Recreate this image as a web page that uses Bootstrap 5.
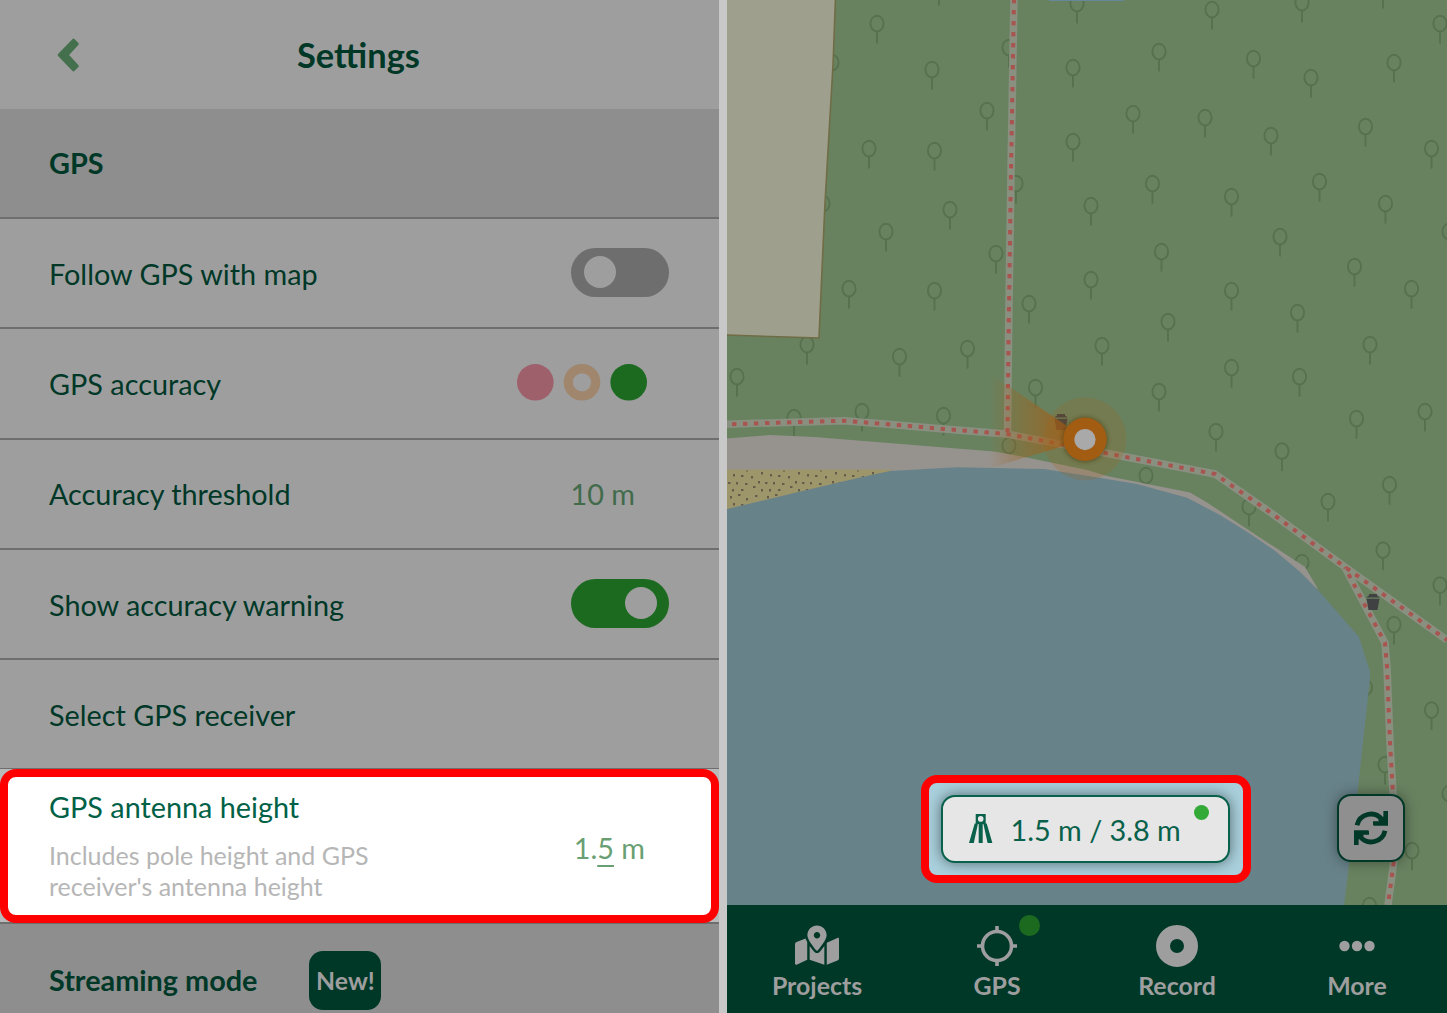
<!DOCTYPE html>
<html lang="en">
<head>
<meta charset="utf-8">
<meta name="viewport" content="width=device-width, initial-scale=1">
<title>GPS settings</title>
<link href="https://cdn.jsdelivr.net/npm/bootstrap@5.3.0/dist/css/bootstrap.min.css" rel="stylesheet">
<style>
:root{--ink:#003828;--panel:#9e9e9e;--section:#8e8e8e;--rule:#6e6e6e;--leaf:#1b6a20}
body{font-family:Lato,"Open Sans",sans-serif;font-size:28.8px;line-height:1.2;color:var(--ink);background:#c8c8c8;width:1447px;height:1013px;overflow:hidden}
svg{display:block}
.settings-pane{width:719px;background:var(--panel)}
.map-pane{width:720px;margin-left:8px}
.top-bar{height:109px;font-size:34.4px;padding:0 2px 0 0}
.back-btn{left:57px;top:38px}
.setting-row{height:110px;padding:1px 50px 0 49px;border-bottom:2px solid var(--rule)}
.setting-row.taller{height:111px}
.row-label{padding-top:2px}
.section-row{background:var(--section)}
.last-row{height:112px;border:0}
.row-value{color:#426b4c;margin-right:34px}
.switch-track{width:98px;height:49px;border-radius:25px;background:var(--rule);padding:0 12px 0 13px;margin-bottom:3px}
.switch-track.is-on{background:var(--leaf)}
.switch-knob{width:32px;height:32px;border-radius:50%;background:var(--panel)}
.accuracy-set{margin:0 22px 3px 0}
.focus-wrap{height:155px;margin-top:-1px;background:#b9b9b9;border-bottom:2px solid var(--rule)}
.focus-row{height:154px;border:8px solid red;border-radius:16px;background:#fff;padding:0 66px 0 41px;color:#006146}
.focus-title{margin-bottom:15px}
.focus-hint{font-size:25px;line-height:31px;color:#b6b6b6}
.focus-value{color:#6a9f73;padding-top:4px}
.edit-digit{text-decoration:underline;text-decoration-thickness:1.6px;text-underline-offset:6px;text-decoration-skip-ink:none}
.new-tag{width:72px;height:59px;border-radius:14px;background:var(--ink);color:var(--panel);font-size:24.8px;margin-left:52px}
.map-canvas{height:905px}
.gps-frame{left:194px;top:774.5px;width:330px;height:108.5px;border:8px solid red;border-radius:16px;background:#a9d0dc;overflow:hidden}
.gps-pill{width:289px;height:68px;border:2px solid #08614a;border-radius:14px;background:#e6e6e6;color:#08614a;padding-left:26px;margin:0 2px 0 0;box-shadow:0 0 14px rgba(0,0,0,.5)}
.pill-text{margin-left:18px;padding-top:4px}
.pill-dot{width:15px;height:15px;border-radius:50%;background:#33a938;right:19px;top:8px}
.sync-btn{left:610px;top:794px;width:68px;height:68px;border:2px solid var(--ink);border-radius:14px;background:#8f8f8f;box-shadow:0 0 13px rgba(0,0,0,.4)}
.bottom-nav{height:108px;background:var(--ink);color:var(--panel);font-size:24.9px}
.nav-cell{width:180px;padding-top:17px}
.nav-cell svg{margin-bottom:1px}
.status-dot{width:21px;height:21px;border-radius:50%;background:var(--leaf);left:112px;top:10px}
</style>
</head>
<body>
<div class="d-flex h-100">
  <main class="settings-pane h-100 overflow-hidden flex-shrink-0">
    <header class="top-bar position-relative d-flex align-items-center justify-content-center fw-bold">
      <svg class="back-btn position-absolute" width="23" height="34" viewBox="0 0 23 34"><path d="M2 17 16.5 2 20.5 6 10.5 17 20.5 28 16.5 32Z" fill="#44704d" stroke="#44704d" stroke-width="2.6" stroke-linejoin="round"/></svg>
      <span>Settings</span>
    </header>
    <div class="setting-row section-row d-flex align-items-center fw-bold">GPS</div>
    <div class="setting-row d-flex align-items-center justify-content-between"><span class="row-label">Follow GPS with map</span><span class="switch-track d-flex align-items-center"><span class="switch-knob"></span></span></div>
    <div class="setting-row taller d-flex align-items-center justify-content-between"><span>GPS accuracy</span>
      <svg class="accuracy-set" width="130" height="37" viewBox="0 0 130 37"><circle cx="18.3" cy="18.3" r="18.3" fill="#9e616c"/><circle cx="65" cy="18.3" r="13.7" fill="none" stroke="#a0866c" stroke-width="9.2"/><circle cx="111.7" cy="18.3" r="18.3" fill="#1b6a20"/></svg></div>
    <div class="setting-row d-flex align-items-center justify-content-between"><span>Accuracy threshold</span><span class="row-value">10 m</span></div>
    <div class="setting-row d-flex align-items-center justify-content-between"><span class="row-label">Show accuracy warning</span><span class="switch-track is-on d-flex align-items-center justify-content-end"><span class="switch-knob"></span></span></div>
    <div class="setting-row d-flex align-items-center"><span class="row-label">Select GPS receiver</span></div>
    <div class="focus-wrap">
      <div class="focus-row d-flex align-items-center justify-content-between">
        <div><div class="focus-title">GPS antenna height</div><div class="focus-hint">Includes pole height and GPS<br>receiver's antenna height</div></div>
        <span class="focus-value">1.<span class="edit-digit">5</span> m</span>
      </div>
    </div>
    <div class="setting-row section-row last-row d-flex align-items-center fw-bold"><span>Streaming mode</span><span class="new-tag d-flex align-items-center justify-content-center">New!</span></div>
  </main>
  <section class="map-pane h-100 position-relative flex-shrink-0">
    <div class="map-canvas">
      <svg width="720" height="905" viewBox="0 0 720 905">
        <defs>
          <g id="tree" fill="none" stroke="#57714f" stroke-width="1.9"><ellipse rx="6.6" ry="7.9"/><path d="M0 8V20"/></g>
          <pattern id="grains" width="37" height="29" patternUnits="userSpaceOnUse"><path fill="#655d4c" d="M3 3h2v2.5h-2zM11 1h2.5v2h-2.5zM19 5h2v2.5h-2zM28 2h2.5v2h-2.5zM34 8h2v2.5h-2zM6 10h2v2.5h-2zM14 11h2.5v2h-2.5zM24 12h2v2.5h-2zM1 18h2.5v2h-2.5zM9 18h2v2.5h-2zM18 19h2.5v2h-2.5zM31 17h2v2.5h-2zM26 22h2.5v2h-2.5zM5 25h2v2.5h-2zM14 25h2.5v2h-2.5zM34 25h2v2.5h-2z"/></pattern>
          <linearGradient id="beam" x1="262" x2="345" y1="0" y2="0" gradientUnits="userSpaceOnUse"><stop offset="0" stop-color="#a85c14" stop-opacity="0"/><stop offset=".3" stop-color="#a06018" stop-opacity=".3"/><stop offset="1" stop-color="#a85c14" stop-opacity=".8"/></linearGradient>
          <filter id="soft" x="-30%" y="-30%" width="160%" height="160%"><feGaussianBlur stdDeviation="2"/></filter>
          <g id="bin" fill="#404143"><path d="M-7-4.5-4-6.5V-8H4V-6.5L7-4.5ZM-6.5-3.2H6.5L4.5 8H-4.5Z"/></g>
        </defs>
        <rect width="720" height="905" fill="#688260"/>
        <g id="forest"></g>
        <path d="M-2-2H108.5L106 65 98 203 95 270 92 338-2 335Z" fill="#9e9f8c" stroke="#706c45" stroke-width="1.6"/>
        <path d="M322 0H397" stroke="#66869a" stroke-width="2"/>
        <path d="M0 438.5 43 435 87 437 267 451.5 300 457.5 360 470 380 476 463 492.5 480 502.5 520 529 578 567 591 589 560 575 500 540 400 500 0 500Z" fill="#96938e"/>
        <path d="M0 469.5H165L100 520H0Z" fill="#9e966b"/>
        <path d="M0 470.5H165L100 520H0Z" fill="url(#grains)"/>
        <path d="M0 509 67 493 133 477.5 163 471 230 467.3 317 469 360 475.7 410 484 460 497.7 493 515 520 531.7 547 550 573 571.7 591 590 623 626.7 632 637 643 672 643 678 631 788 622 865 617 905H0Z" fill="#68828a"/>
        <g fill="none" stroke-linejoin="round">
          <g stroke="#899080" stroke-width="7.5"><path d="M287-2 284 170 281.5 340 280.5 434M0 424.3 50 422.7 117 420.7 167 424.7 217 429 280 434 333 444 378 453 488 474 547 515 618 567 720 640M618 567 623 577 658 643 660 667 663 743 667 810V860L661 905"/></g>
          <g stroke="#a8544f" stroke-width="4" stroke-dasharray="4.4 6.6"><path d="M287-1 284 170 281.5 340 280.5 434"/><path stroke-dashoffset="-5" d="M0 424.3 50 422.7 117 420.7 167 424.7 217 429 280 434 333 444 378 453 488 474 547 515 618 567 720 640"/><path stroke-dashoffset="-8" d="M618 567 623 577 658 643 660 667 663 743 667 810V860L661 905"/></g>
        </g>
        <use href="#bin" x="646" y="602"/>
        <use href="#bin" x="334" y="422"/>
        <path d="M262 374 286 389 350 433 350 442 262 468.5Z" fill="url(#beam)"/>
        <circle cx="358" cy="438.8" r="41.5" fill="#a06218" fill-opacity=".22"/>
        <circle cx="358" cy="439.5" r="22.5" fill="#403818" fill-opacity=".6" filter="url(#soft)"/>
        <circle cx="358" cy="439.3" r="21.7" fill="#a35d13"/>
        <circle cx="358" cy="439.6" r="10.6" fill="#aaa9aa"/>
      </svg>
    </div>
    <div class="gps-frame position-absolute d-flex align-items-center justify-content-center">
      <div class="gps-pill d-flex align-items-center position-relative flex-shrink-0">
        <svg width="24" height="29" viewBox="0 0 24 29" fill="#08614a"><path fill-rule="evenodd" d="M6.7 0H16.7V10H6.7ZM11.7 2.1A2.8 2.8 0 1 0 11.7 7.7 2.8 2.8 0 1 0 11.7 2.1Z"/><path d="M9.7 9H13.7V29H9.7ZM5.7 9.5H9L4.8 29H0ZM17.7 9.5H14.3L18.6 29H23.4Z"/></svg>
        <span class="pill-text">1.5 m / 3.8 m</span>
        <span class="pill-dot position-absolute"></span>
      </div>
    </div>
    <button class="sync-btn position-absolute p-0 d-flex align-items-center justify-content-center" aria-label="Sync">
      <svg width="34" height="34" viewBox="0 0 34 34"><defs><g id="turn"><path d="M3 14.3A14.2 14.2 0 0 1 27.8 8.2" fill="none" stroke="#003828" stroke-width="4.8"/><path d="M29.4 0H34V14.8H20.3Q19 14.8 19 13.5V10.3H25.2L24 9 29.4 5.5Z" fill="#003828"/></g></defs><use href="#turn"/><use href="#turn" transform="rotate(180 17 17)"/></svg>
    </button>
    <nav class="bottom-nav d-flex fw-bold">
      <div class="nav-cell d-flex flex-column align-items-center"><svg width="48" height="48" viewBox="0 0 48 48"><path transform="translate(2 3.6) scale(.0764)" fill="#9e9e9e" d="M288 0c-69.59 0-126 56.41-126 126 0 56.26 82.35 158.8 113.9 196.02 6.39 7.54 17.82 7.54 24.2 0C331.65 284.8 414 182.26 414 126 414 56.41 357.59 0 288 0zm0 168c-23.2 0-42-18.8-42-42s18.8-42 42-42 42 18.8 42 42-18.8 42-42 42zM20.12 215.95A32.006 32.006 0 0 0 0 245.66v250.32c0 11.32 11.43 19.06 21.94 14.86L160 448V214.92c-8.84-15.98-16.07-31.54-21.25-46.42L20.12 215.95zM288 359.67c-14.07 0-27.38-6.18-36.51-16.96-19.66-23.2-40.57-49.62-59.49-76.72v182l192 64V266c-18.92 27.09-39.82 53.52-59.49 76.72-9.13 10.77-22.44 16.95-36.51 16.95zm266.06-198.51L416 224v288l139.88-55.95A31.996 31.996 0 0 0 576 426.34V176.02c0-11.32-11.43-19.06-21.94-14.86z"/></svg><span>Projects</span></div>
      <div class="nav-cell d-flex flex-column align-items-center position-relative"><svg width="48" height="48" viewBox="0 0 48 48" fill="none" stroke="#9e9e9e" stroke-width="3.6"><circle cx="24" cy="24" r="14.5"/><path d="M24 4V10.5M24 37.5V44M4 24H10.5M37.5 24H44"/></svg><span>GPS</span><span class="status-dot position-absolute"></span></div>
      <div class="nav-cell d-flex flex-column align-items-center"><svg width="48" height="48" viewBox="0 0 48 48"><circle cx="24" cy="24" r="14" fill="none" stroke="#9e9e9e" stroke-width="14"/></svg><span>Record</span></div>
      <div class="nav-cell d-flex flex-column align-items-center"><svg width="48" height="48" viewBox="0 0 48 48" fill="#9e9e9e"><circle cx="11.5" cy="24" r="5.2"/><circle cx="24" cy="24" r="5.2"/><circle cx="36.5" cy="24" r="5.2"/></svg><span>More</span></div>
    </nav>
  </section>
</div>
<script src="https://cdn.jsdelivr.net/npm/bootstrap@5.3.0/dist/js/bootstrap.bundle.min.js"></script>
<script>
const trees = [[150,23],[205,69],[260,110],[142,148],[207.5,150],[223,209],[159,231],[269,253],[122,288],[207.5,290],[302,303],[346,67],[346,141],[289,183],[350,3],[282,47],[105,62],[96,203],[212,-15],
[364,205],[364,279],[485,9],[575,2],[656,-12],[713,23],[432,51],[526.5,58],[584,77],[667,62],[406,113],[478,117],[544,135],[638.5,126],[704.5,148],[425.5,183],[504.5,196],[592.5,181],[658.5,203],[553,236],[434.5,251],[627.5,266],[722,231],[504.5,290],[684.5,288],[441,321],[570.5,312],[375,345],[643,344],
[80,344],[172.5,356],[240.5,348],[10,376],[67,417],[135,411],[216.5,415],[308.5,387],[282,445],[504.5,367],[572.5,376],[432,391],[629.5,418],[698,411],[489,431],[555,450.5],[419,475],[662.5,484],[601,501],[522,506],[575,562],[656,549.5],[713,584.5],[667,624],
[704.5,709.5],[638.5,687],[658,764],[722,793],[685,850],[642.5,905]];
document.getElementById('forest').innerHTML = trees.map(([x, y]) => `<use href="#tree" x="${x}" y="${y + .6}"/>`).join('');
</script>
</body>
</html>
